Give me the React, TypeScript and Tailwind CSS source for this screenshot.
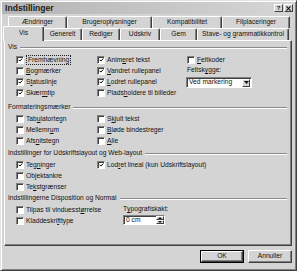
import type { ReactNode } from "react";

function Check({ checked }: { checked?: boolean }) {
  return (
    <span className="flex h-[8px] w-[8px] shrink-0 items-center justify-center border border-t-[#808080] border-l-[#808080] border-r-white border-b-white bg-white shadow-[inset_1px_1px_0_#404040]">
      {checked && (
        <svg viewBox="0 0 7 7" className="ml-[1px] mt-[1px] h-[6px] w-[6px]">
          <path d="M0.8 3.2 L2.6 5 L6 1.4" stroke="#000" strokeWidth="1.4" fill="none" />
        </svg>
      )}
    </span>
  );
}

function Opt({ children, checked, focus }: { children: ReactNode; checked?: boolean; focus?: boolean }) {
  return (
    <div className="flex h-[11px] items-center gap-[2px] whitespace-nowrap">
      <Check checked={checked} />
      <span className={focus ? "border border-dotted border-[#222] px-[1px] leading-[8px]" : "leading-[8px]"}>{children}</span>
    </div>
  );
}

function Group({ title }: { title: string }) {
  return (
    <div className="flex h-[11px] items-center gap-[3px] pl-[3px] pr-[4px]">
      <span className="whitespace-nowrap">{title}</span>
      <div className="h-[2px] flex-1 border-t border-b border-t-[#8a8a8a] border-b-white" />
    </div>
  );
}

function Tab({ label, w, selected }: { label: string; w: string; selected?: boolean }) {
  return (
    <div
      className={
        (selected
          ? "relative z-10 -mx-[1px] mb-[-1px] h-[15px] bg-[#d4d4d4] pb-[1px] "
          : "h-[12px] ") +
        w +
        " flex shrink-0 items-center justify-center rounded-t-[2px] border-t border-l border-r border-t-white border-l-white border-r-[#404040] shadow-[inset_-1px_0_0_#808080] whitespace-nowrap"
      }
    >
      {label}
    </div>
  );
}

function Btn({ children, def }: { children: ReactNode; def?: boolean }) {
  return (
    <div className={"h-[13px] w-[44px] " + (def ? "border border-black" : "")}>
      <div className="flex h-full w-full items-center justify-center border border-t-white border-l-white border-r-[#404040] border-b-[#404040] shadow-[inset_-1px_-1px_0_#808080]">
        {children}
      </div>
    </div>
  );
}

function U({ children }: { children: ReactNode }) {
  return <span className="underline decoration-[0.5px] underline-offset-[1px]">{children}</span>;
}

export default function App() {
  return (
    <div className="h-[271px] w-[297px] bg-[#d4d4d4] font-['Liberation_Sans',Arial,sans-serif] text-[6.7px] text-[#111]">
      <div className="flex h-full w-full flex-col border border-t-[#e2e2e2] border-l-[#e2e2e2] border-r-[#404040] border-b-[#404040] p-[1px] shadow-[inset_1px_1px_0_#fff,inset_-1px_-1px_0_#808080]">
        {/* title bar */}
        <div className="flex h-[12px] shrink-0 items-center bg-gradient-to-r from-[#b4b4b4] to-[#d6d6d6] pl-[3px] pr-[2px]">
          <span className="flex-1 text-[8.6px] font-bold leading-none text-[#1c1c1c]">Indstillinger</span>
          <div className="flex gap-[1px]">
            <div className="flex h-[8px] w-[9px] items-center justify-center border border-t-white border-l-white border-r-[#404040] border-b-[#404040] bg-[#d4d4d4] text-[6px] font-bold leading-none">?</div>
            <div className="flex h-[8px] w-[9px] items-center justify-center border border-t-white border-l-white border-r-[#404040] border-b-[#404040] bg-[#d4d4d4]">
              <svg viewBox="0 0 6 6" className="h-[5px] w-[5px]">
                <path d="M0.5 0.5 L5.5 5.5 M5.5 0.5 L0.5 5.5" stroke="#111" strokeWidth="1.3" />
              </svg>
            </div>
          </div>
        </div>

        {/* tabs */}
        <div className="mt-[2px] flex h-[12px] shrink-0 pl-[6px]">
          <Tab label="Ændringer" w="w-[59px]" />
          <Tab label="Brugeroplysninger" w="w-[85px]" />
          <Tab label="Kompatibilitet" w="w-[70px]" />
          <Tab label="Filplaceringer" w="w-[68px]" />
        </div>
        <div className="flex h-[12px] shrink-0 items-end pl-[2px]">
          <Tab label="Vis" w="w-[41px]" selected />
          <Tab label="Generelt" w="w-[39px]" />
          <Tab label="Rediger" w="w-[38px]" />
          <Tab label="Udskriv" w="w-[40px]" />
          <Tab label="Gem" w="w-[37px]" />
          <Tab label="Stave- og grammatikkontrol" w="w-[92px]" />
        </div>

        {/* panel */}
        <div className="ml-[2px] flex h-[206px] w-[288px] shrink-0 flex-col border border-t-white border-l-white border-r-[#404040] border-b-[#404040] pt-[1px] shadow-[inset_-1px_-1px_0_#808080]">
          <Group title="Vis" />
          <div className="mt-[1px] grid grid-cols-[81px_90px_1fr] pl-[11px]">
            <div>
              <Opt checked focus>Fremhævning</Opt>
              <Opt><U>B</U>ogmærker</Opt>
              <Opt checked>S<U>t</U>atuslinje</Opt>
              <Opt checked>Skær<U>m</U>tip</Opt>
            </div>
            <div>
              <Opt checked>Anim<U>e</U>ret tekst</Opt>
              <Opt checked><U>V</U>andret rullepanel</Opt>
              <Opt checked><U>L</U>odret rullepanel</Opt>
              <Opt>Plads<U>h</U>oldere til billeder</Opt>
            </div>
            <div>
              <Opt><U>F</U>eltkoder</Opt>
              <div className="flex h-[11px] items-center">Feltsk<U>y</U>gge:</div>
              <div className="-ml-[1px] mt-[1px] flex h-[11px] w-[66px] items-center border border-t-[#808080] border-l-[#808080] border-r-white border-b-white bg-white shadow-[inset_1px_1px_0_#404040]">
                <span className="flex-1 pl-[2px]">Ved markering</span>
                <div className="mr-[1px] flex h-[8px] w-[8px] items-center justify-center border border-t-white border-l-white border-r-[#404040] border-b-[#404040] bg-[#d4d4d4]">
                  <svg viewBox="0 0 5 3" className="h-[3px] w-[5px]">
                    <path d="M0 0 H5 L2.5 3 Z" fill="#111" />
                  </svg>
                </div>
              </div>
            </div>
          </div>

          <div className="mt-[4px]">
            <Group title="Formateringsmærker" />
          </div>
          <div className="grid grid-cols-[81px_1fr] pl-[11px]">
            <div>
              <Opt>Tab<U>u</U>latortegn</Opt>
              <Opt>Mellemr<U>u</U>m</Opt>
              <Opt>Afs<U>n</U>itstegn</Opt>
            </div>
            <div>
              <Opt>S<U>k</U>jult tekst</Opt>
              <Opt><U>B</U>løde bindestreger</Opt>
              <Opt><U>A</U>lle</Opt>
            </div>
          </div>

          <div className="mt-[2px]">
            <Group title="Indstillinger for Udskriftslayout og Web-layout" />
          </div>
          <div className="grid grid-cols-[81px_1fr] pl-[11px]">
            <div>
              <Opt checked>Teg<U>n</U>inger</Opt>
              <Opt>Ob<U>j</U>ektankre</Opt>
              <Opt>Te<U>k</U>stgrænser</Opt>
            </div>
            <div>
              <Opt checked>Lod<U>r</U>et lineal (kun Udskriftslayout)</Opt>
            </div>
          </div>

          <div className="mt-[1px]">
            <Group title="Indstillingerne Disposition og Normal" />
          </div>
          <div className="grid grid-cols-[107px_1fr] pl-[11px]">
            <div>
              <Opt>Tilpas til vinduesst<U>ø</U>rrelse</Opt>
              <Opt>Kladdeskri<U>f</U>ttype</Opt>
            </div>
            <div>
              <div className="flex h-[11px] items-center">T<U>y</U>pografiskakt:</div>
              <div className="flex h-[10px] w-[42px] items-center border border-t-[#808080] border-l-[#808080] border-r-white border-b-white bg-white shadow-[inset_1px_1px_0_#404040]">
                <span className="flex-1 pl-[2px]">0 cm</span>
                <div className="flex h-full w-[8px] flex-col">
                  <div className="flex flex-1 items-center justify-center border border-t-white border-l-white border-r-[#404040] border-b-[#404040] bg-[#d4d4d4]">
                    <svg viewBox="0 0 4 2" className="h-[2px] w-[4px]"><path d="M0 2 H4 L2 0 Z" fill="#111" /></svg>
                  </div>
                  <div className="flex flex-1 items-center justify-center border border-t-white border-l-white border-r-[#404040] border-b-[#404040] bg-[#d4d4d4]">
                    <svg viewBox="0 0 4 2" className="h-[2px] w-[4px]"><path d="M0 0 H4 L2 2 Z" fill="#111" /></svg>
                  </div>
                </div>
              </div>
            </div>
          </div>
        </div>

        {/* buttons */}
        <div className="mt-[4px] flex justify-end gap-[4px] pr-[3px]">
          <Btn def>OK</Btn>
          <Btn>Annuller</Btn>
        </div>
      </div>
    </div>
  );
}
